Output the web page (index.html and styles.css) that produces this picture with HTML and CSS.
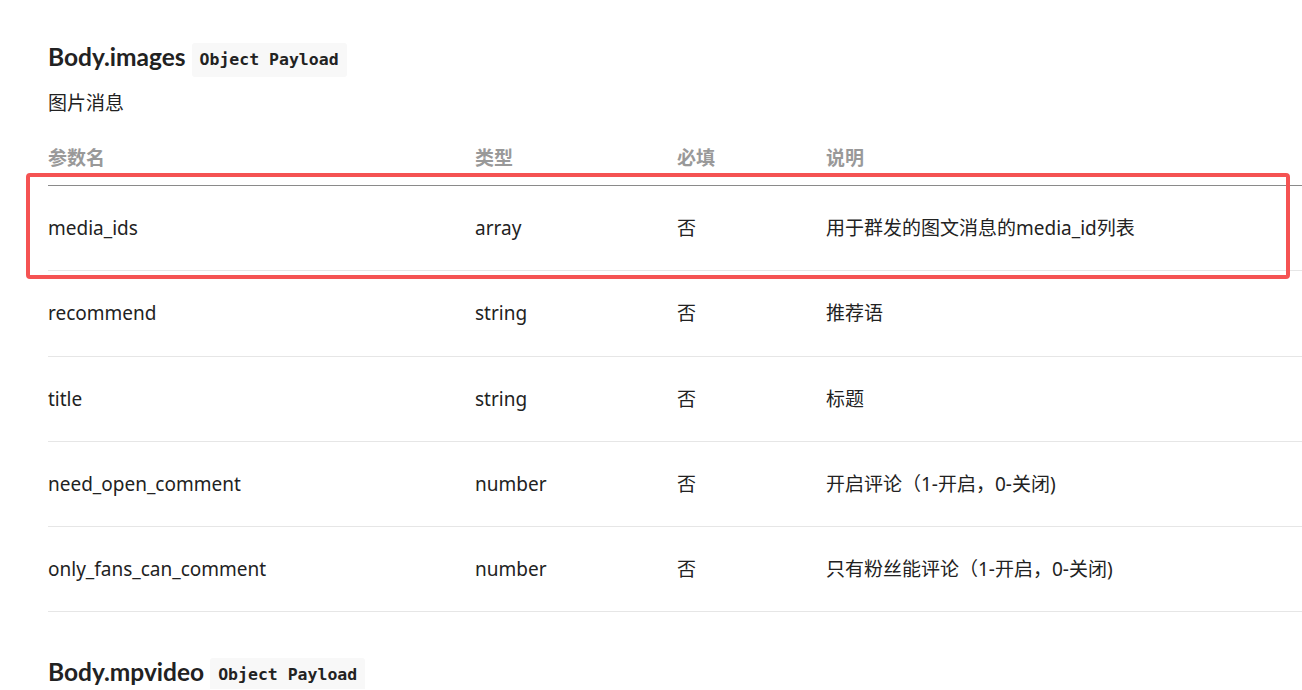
FILE: index.html
```html
<!DOCTYPE html>
<html lang="zh">
<head>
<meta charset="utf-8">
<title>Body.images</title>
<link rel="stylesheet" href="styles.css">
</head>
<body>
<div class="doc">
  <section class="block">
    <h3 class="title">Body.images <code class="tag">Object Payload</code></h3>
    <p class="desc">图片消息</p>
    <div class="tbl-wrap">
      <table class="params">
        <thead>
          <tr><th class="c1">参数名</th><th class="c2">类型</th><th class="c3">必填</th><th class="c4">说明</th></tr>
        </thead>
        <tbody>
          <tr><td>media_ids</td><td>array</td><td>否</td><td>用于群发的图文消息的media_id列表</td></tr>
          <tr><td>recommend</td><td>string</td><td>否</td><td>推荐语</td></tr>
          <tr><td>title</td><td>string</td><td>否</td><td>标题</td></tr>
          <tr><td>need_open_comment</td><td>number</td><td>否</td><td>开启评论（1-开启，0-关闭)</td></tr>
          <tr><td>only_fans_can_comment</td><td>number</td><td>否</td><td>只有粉丝能评论（1-开启，0-关闭)</td></tr>
        </tbody>
      </table>
      <div class="highlight"></div>
    </div>
  </section>
  <section class="block">
    <h3 class="title">Body.mpvideo <code class="tag">Object Payload</code></h3>
  </section>
</div>
</body>
</html>
```
FILE: styles.css
```css
html, body {
  margin: 0;
  padding: 0;
  overflow: hidden;
  background: #ffffff;
}
body {
  font-family: "Noto Sans", "Noto Sans CJK SC", sans-serif;
  color: #222222;
}
.doc {
  padding: 40px 0 0 48px;
  width: 1300px;
}
.block + .block {
  margin-top: 43px;
}
.title {
  margin: 0;
  font-family: "Lato", "Noto Sans", sans-serif;
  font-size: 24.5px;
  font-weight: 700;
  line-height: 34px;
  display: flex;
  align-items: center;
  gap: 6px;
  color: #222;
}
.tag {
  font-family: "DejaVu Sans Mono", monospace;
  font-size: 16.5px;
  font-weight: 700;
  background: #f8f8f8;
  border-radius: 3px;
  padding: 4px 8px;
  line-height: 26px;
  color: #222;
  margin-top: 3px;
  margin-bottom: -3px;
}
.desc {
  margin: 15px 0 0;
  font-size: 19px;
  line-height: 28px;
}
.tbl-wrap {
  position: relative;
  margin-top: 26px;
}
.params {
  border-collapse: collapse;
  width: 1300px;
  font-size: 19px;
}
.params th {
  text-align: left;
  color: #999999;
  font-weight: 700;
  padding: 1px 0 13px;
  line-height: 28px;
  border-bottom: 1px solid #8a8a8a;
}
.params td {
  padding: 28px 0;
  line-height: 28.3px;
  border-bottom: 1px solid #e6e6e6;
  color: #222;
}
.c1 { width: 427px; }
.c2 { width: 202px; }
.c3 { width: 149px; }
.highlight {
  position: absolute;
  left: -22px;
  top: 30px;
  width: 1256px;
  height: 98px;
  border: 4px solid #f55353;
  border-radius: 4px;
}
```
